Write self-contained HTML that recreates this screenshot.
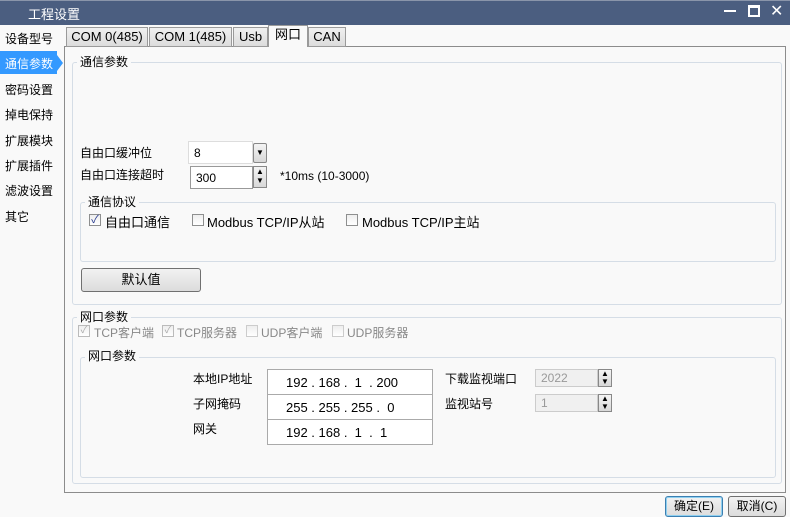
<!DOCTYPE html><html><head><meta charset="utf-8"><style>
*{box-sizing:border-box;margin:0;padding:0}
body{width:790px;height:517px;background:#f9f9f9;font-family:"Liberation Sans","Noto Sans CJK SC",sans-serif;font-size:12px;color:#000;position:relative;overflow:hidden}
.a{position:absolute;white-space:nowrap}
.tb{left:0;top:0;width:790px;height:25px;background:#4b5e80;border-top:1px solid #8a95aa}
.tab{top:27px;height:20px;border:1px solid #9a9a9a;background:linear-gradient(#f0f0f0,#dcdcdc);font-size:13px;line-height:18px;text-align:center}
.grp{border:1px solid #d5dde6;border-radius:3px}
.lg{background:#f9f9f9;padding:0 3px;font-size:12px;line-height:14px}
.inp{background:#fff;border:1px solid #aaa;height:23px;line-height:22px;padding-left:5px;font-size:12px}
.ip{white-space:pre}
.cb{width:12px;height:12px;border:1px solid #8e8f8f;background:linear-gradient(#eee,#fff)}
.spin{width:14px;border:1px solid #888;background:linear-gradient(#f4f4f4,#d8d8d8);font-size:8px;text-align:center;line-height:9px;color:#000}
.btn{border:1px solid #707070;border-radius:3px;background:linear-gradient(#f2f2f2,#dcdcdc);text-align:center}
</style></head><body>
<div class="a tb"></div>
<div class="a" style="left:28px;top:4px;color:#fff;font-size:13px">工程设置</div>
<div class="a" style="left:724px;top:10px;width:12px;height:2px;background:#fff"></div>
<div class="a" style="left:748px;top:5px;width:12px;height:12px;border:2px solid #fff;border-top-width:3px"></div>
<div class="a" style="left:770px;top:1px;color:#fff;font-size:16px">✕</div>

<div class="a" style="left:5px;top:30px;font-size:12px">设备型号</div>
<div class="a" style="left:0;top:51px;width:57px;height:23px;background:#3399ff"></div>
<div class="a" style="left:57px;top:55px;width:0;height:0;border-left:6px solid #3399ff;border-top:8px solid transparent;border-bottom:8px solid transparent"></div>
<div class="a" style="left:5px;top:55px;color:#fff">通信参数</div>
<div class="a" style="left:5px;top:81px">密码设置</div>
<div class="a" style="left:5px;top:106px">掉电保持</div>
<div class="a" style="left:5px;top:132px">扩展模块</div>
<div class="a" style="left:5px;top:157px">扩展插件</div>
<div class="a" style="left:5px;top:182px">滤波设置</div>
<div class="a" style="left:5px;top:208px">其它</div>

<div class="a" style="left:64px;top:46px;width:722px;height:447px;border:1px solid #8c8c8c;background:#f9f9f9"></div>
<div class="a tab" style="left:66px;width:82px">COM 0(485)</div>
<div class="a tab" style="left:149px;width:83px">COM 1(485)</div>
<div class="a tab" style="left:233px;width:35px">Usb</div>
<div class="a tab" style="left:268px;top:25px;height:22px;width:40px;background:#f9f9f9;border-bottom:none">网口</div>
<div class="a tab" style="left:308px;width:38px">CAN</div>

<div class="a grp" style="left:72px;top:62px;width:710px;height:243px"></div>
<div class="a lg" style="left:77px;top:55px">通信参数</div>
<div class="a" style="left:80px;top:144px">自由口缓冲位</div>
<div class="a inp" style="left:188px;top:141px;width:65px;border-color:#ddd">8</div>
<div class="a spin" style="left:253px;top:143px;height:20px;line-height:18px;border-radius:2px">▼</div>
<div class="a" style="left:80px;top:166px">自由口连接超时</div>
<div class="a inp" style="left:190px;top:166px;width:63px;border-color:#999">300</div>
<div class="a spin" style="left:253px;top:166px;height:22px">▲<br>▼</div>
<div class="a" style="left:280px;top:169px">*10ms (10-3000)</div>
<div class="a grp" style="left:80px;top:202px;width:696px;height:60px"></div>
<div class="a lg" style="left:85px;top:195px">通信协议</div>
<div class="a cb" style="left:89px;top:214px;font-size:11px;line-height:10px;color:#2a3c8f;text-align:center">✓</div>
<div class="a" style="left:105px;top:212px;font-size:13px">自由口通信</div>
<div class="a cb" style="left:192px;top:214px"></div>
<div class="a" style="left:207px;top:212px;font-size:13px">Modbus TCP/IP从站</div>
<div class="a cb" style="left:346px;top:214px"></div>
<div class="a" style="left:362px;top:212px;font-size:13px">Modbus TCP/IP主站</div>
<div class="a btn" style="left:81px;top:268px;width:120px;height:24px;line-height:22px;font-size:13px">默认值</div>

<div class="a grp" style="left:72px;top:317px;width:710px;height:167px"></div>
<div class="a lg" style="left:77px;top:310px">网口参数</div>
<div class="a cb" style="left:78px;top:325px;border-color:#bbb;color:#aaa;font-size:10px;line-height:10px;text-align:center">✓</div>
<div class="a" style="left:94px;top:324px;color:#888">TCP客户端</div>
<div class="a cb" style="left:162px;top:325px;border-color:#bbb;color:#aaa;font-size:10px;line-height:10px;text-align:center">✓</div>
<div class="a" style="left:177px;top:324px;color:#888">TCP服务器</div>
<div class="a cb" style="left:246px;top:325px;border-color:#ccc"></div>
<div class="a" style="left:261px;top:324px;color:#888">UDP客户端</div>
<div class="a cb" style="left:332px;top:325px;border-color:#ccc"></div>
<div class="a" style="left:347px;top:324px;color:#888">UDP服务器</div>
<div class="a grp" style="left:80px;top:357px;width:696px;height:121px"></div>
<div class="a lg" style="left:85px;top:349px">网口参数</div>
<div class="a" style="left:193px;top:370px">本地IP地址</div>
<div class="a" style="left:193px;top:395px">子网掩码</div>
<div class="a" style="left:193px;top:420px">网关</div>
<div class="a inp ip" style="left:267px;top:369px;width:166px;height:26px;line-height:26px;font-size:13px;padding-left:18px;border-color:#aaa">192 . 168 .  1  . 200</div>
<div class="a inp ip" style="left:267px;top:394px;width:166px;height:26px;line-height:26px;font-size:13px;padding-left:18px;border-color:#aaa">255 . 255 . 255 .  0</div>
<div class="a inp ip" style="left:267px;top:419px;width:166px;height:26px;line-height:26px;font-size:13px;padding-left:18px;border-color:#aaa">192 . 168 .  1  .  1</div>
<div class="a" style="left:445px;top:370px">下载监视端口</div>
<div class="a" style="left:445px;top:395px">监视站号</div>
<div class="a inp" style="left:535px;top:369px;width:63px;height:18px;line-height:17px;background:#f0f0f0;border-color:#ccc;color:#999">2022</div>
<div class="a spin" style="left:598px;top:369px;height:18px;line-height:8px">▲<br>▼</div>
<div class="a inp" style="left:535px;top:394px;width:63px;height:18px;line-height:17px;background:#f0f0f0;border-color:#ccc;color:#999">1</div>
<div class="a spin" style="left:598px;top:394px;height:18px;line-height:8px">▲<br>▼</div>

<div class="a btn" style="left:665px;top:496px;width:58px;height:21px;line-height:19px;border-color:#3c7fb1;box-shadow:inset 0 0 0 1px #8fd0f0">确定(E)</div>
<div class="a btn" style="left:728px;top:496px;width:58px;height:21px;line-height:19px">取消(C)</div>
</body></html>
